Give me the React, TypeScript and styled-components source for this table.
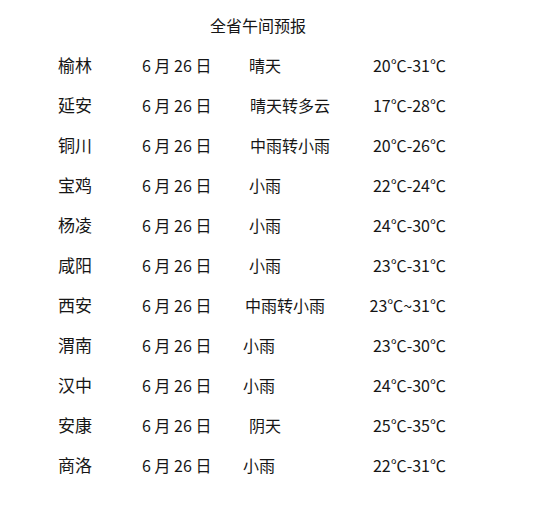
import React from 'react';
import styled, { createGlobalStyle } from 'styled-components';

interface ForecastRow {
    city: string,
    date: string,
    weather: string,
    temp: string,
    shift: number
}

const rows: Array<ForecastRow> = [
    { city: '榆林', date: '6 月 26 日', weather: '晴天', temp: '20℃-31℃', shift: 6 },
    { city: '延安', date: '6 月 26 日', weather: '晴天转多云', temp: '17℃-28℃', shift: 7 },
    { city: '铜川', date: '6 月 26 日', weather: '中雨转小雨', temp: '20℃-26℃', shift: 7 },
    { city: '宝鸡', date: '6 月 26 日', weather: '小雨', temp: '22℃-24℃', shift: 6 },
    { city: '杨凌', date: '6 月 26 日', weather: '小雨', temp: '24℃-30℃', shift: 6 },
    { city: '咸阳', date: '6 月 26 日', weather: '小雨', temp: '23℃-31℃', shift: 6 },
    { city: '西安', date: '6 月 26 日', weather: '中雨转小雨', temp: '23℃~31℃', shift: 2 },
    { city: '渭南', date: '6 月 26 日', weather: '小雨', temp: '23℃-30℃', shift: 0 },
    { city: '汉中', date: '6 月 26 日', weather: '小雨', temp: '24℃-30℃', shift: 0 },
    { city: '安康', date: '6 月 26 日', weather: '阴天', temp: '25℃-35℃', shift: 6 },
    { city: '商洛', date: '6 月 26 日', weather: '小雨', temp: '22℃-31℃', shift: 0 },
];

const GlobalStyle = createGlobalStyle`
    html, body {
        margin: 0;
        padding: 0;
        background: #ffffff;
    }
    body {
        font-family: "Noto Sans CJK SC", "Noto Sans", sans-serif;
        color: #161616;
    }
`;

const Page = styled.div`
    width: 545px;
    height: 528px;
    box-sizing: border-box;
    padding-left: 58px;
    background: #ffffff;
`;

const Sheet = styled.div`
    width: 400px;
`;

const Title = styled.div`
    padding-top: 13px;
    line-height: 24px;
    font-size: 16px;
    text-align: center;
    margin-bottom: 8px;
`;

const Row = styled.div`
    display: grid;
    grid-template-columns: 84px 101px 1fr 100px;
    height: 40px;
    align-items: center;
    font-size: 16px;
    padding-right: 12px;
`;

const Cell = styled.div`
    white-space: nowrap;
    line-height: 40px;
`;

const City = styled(Cell)`
    font-size: 17px;
`;

const Weather = styled(Cell)<{ shift: number }>`
    padding-left: ${props => props.shift}px;
`;

const Temp = styled(Cell)`
    text-align: right;
`;

const App: React.FC = () => {
    return (
        <Page>
            <GlobalStyle />
            <Sheet>
                <Title>全省午间预报</Title>
                {
                    rows.map((row: ForecastRow) => (
                        <Row key={row.city}>
                            <City>{row.city}</City>
                            <Cell>{row.date}</Cell>
                            <Weather shift={row.shift}>{row.weather}</Weather>
                            <Temp>{row.temp}</Temp>
                        </Row>
                    ))
                }
            </Sheet>
        </Page>
    )
}

export default App;
